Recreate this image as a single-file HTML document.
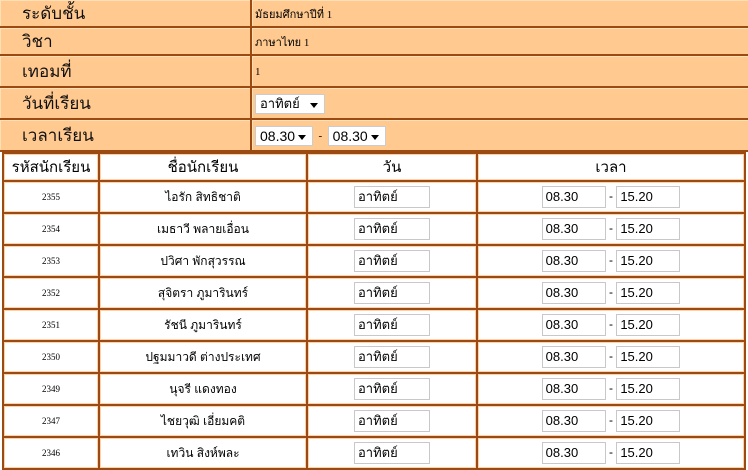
<!DOCTYPE html>
<html><head><meta charset="utf-8"><style>
body{margin:0;background:#fff;width:748px;height:470px;overflow:hidden;font-family:"Liberation Sans","Noto Sans CJK SC",sans-serif}
.top{position:absolute;left:0;top:0;width:748px;background:#9b4a12;}
.r{position:absolute;left:0;width:748px;}
.l,.v{position:absolute;top:0;bottom:0;background:#ffc98f;border-top:1px solid #ffdfb8;border-left:1px solid #ffdfb8;box-sizing:border-box}
.l{left:0;width:250px;font-size:17px;padding-left:21px;display:flex;align-items:center;color:#111}
.v{left:252px;right:0;font-size:11px;font-family:"Liberation Serif","Noto Serif CJK SC",serif;display:flex;align-items:center;padding-left:2px}
.sel{background:#fff;border:1px solid #ccc;height:20px;font-size:14px;display:inline-flex;align-items:center;padding-left:4px;box-sizing:border-box;position:relative;font-family:"Liberation Sans",sans-serif}
.sel:after{content:"";position:absolute;right:6px;top:8px;border:4px solid transparent;border-top:5px solid #000;border-bottom:0}
table{position:absolute;left:2px;top:152px;border-collapse:separate;border-spacing:2px;background:#9b4a12;width:744px}
td{background:#fff;border:1px solid #ffd0a8;text-align:center;font-size:12px;height:28px;padding:0}
tr.h td{height:24px;font-size:15px}
.n{font-size:9px;font-family:"Liberation Serif",serif}
.in{display:inline-block;border:1px solid #c8c8c8;height:22px;box-sizing:border-box;text-align:left;padding-left:3px;font-size:13px;line-height:20px;vertical-align:middle}
</style></head><body>
<div class="top" style="height:152px"></div>
<div class="r" style="top:0;height:26px"><div class="l">ระดับชั้น</div><div class="v">มัธยมศึกษาปีที่ 1</div></div>
<div class="r" style="top:28px;height:26px"><div class="l">วิชา</div><div class="v">ภาษาไทย 1</div></div>
<div class="r" style="top:56px;height:30px"><div class="l">เทอมที่</div><div class="v">1</div></div>
<div class="r" style="top:88px;height:30px"><div class="l">วันที่เรียน</div><div class="v"><span class="sel" style="width:70px;font-size:13px">อาทิตย์</span></div></div>
<div class="r" style="top:120px;height:30px"><div class="l">เวลาเรียน</div><div class="v"><span class="sel" style="width:58px">08.30</span>&nbsp;&nbsp;-&nbsp;&nbsp;<span class="sel" style="width:58px">08.30</span></div></div>
<table>
<tr class="h"><td style="width:92px">รหัสนักเรียน</td><td style="width:204px">ชื่อนักเรียน</td><td style="width:166px">วัน</td><td>เวลา</td></tr>
<tr><td class="n">2355</td><td>ไอรัก สิทธิชาติ</td><td><span class="in" style="width:76px">อาทิตย์</span></td><td><span class="in" style="width:64px">08.30</span> - <span class="in" style="width:64px">15.20</span></td></tr>
<tr><td class="n">2354</td><td>เมธาวี พลายเอื่อน</td><td><span class="in" style="width:76px">อาทิตย์</span></td><td><span class="in" style="width:64px">08.30</span> - <span class="in" style="width:64px">15.20</span></td></tr>
<tr><td class="n">2353</td><td>ปวิศา พักสุวรรณ</td><td><span class="in" style="width:76px">อาทิตย์</span></td><td><span class="in" style="width:64px">08.30</span> - <span class="in" style="width:64px">15.20</span></td></tr>
<tr><td class="n">2352</td><td>สุจิตรา ภูมารินทร์</td><td><span class="in" style="width:76px">อาทิตย์</span></td><td><span class="in" style="width:64px">08.30</span> - <span class="in" style="width:64px">15.20</span></td></tr>
<tr><td class="n">2351</td><td>รัชนี ภูมารินทร์</td><td><span class="in" style="width:76px">อาทิตย์</span></td><td><span class="in" style="width:64px">08.30</span> - <span class="in" style="width:64px">15.20</span></td></tr>
<tr><td class="n">2350</td><td>ปฐมมาวดี ต่างประเทศ</td><td><span class="in" style="width:76px">อาทิตย์</span></td><td><span class="in" style="width:64px">08.30</span> - <span class="in" style="width:64px">15.20</span></td></tr>
<tr><td class="n">2349</td><td>นุจรี แดงทอง</td><td><span class="in" style="width:76px">อาทิตย์</span></td><td><span class="in" style="width:64px">08.30</span> - <span class="in" style="width:64px">15.20</span></td></tr>
<tr><td class="n">2347</td><td>ไชยวุฒิ เอี่ยมคติ</td><td><span class="in" style="width:76px">อาทิตย์</span></td><td><span class="in" style="width:64px">08.30</span> - <span class="in" style="width:64px">15.20</span></td></tr>
<tr><td class="n">2346</td><td>เทวิน สิงห์พละ</td><td><span class="in" style="width:76px">อาทิตย์</span></td><td><span class="in" style="width:64px">08.30</span> - <span class="in" style="width:64px">15.20</span></td></tr>
</table>
</body></html>
